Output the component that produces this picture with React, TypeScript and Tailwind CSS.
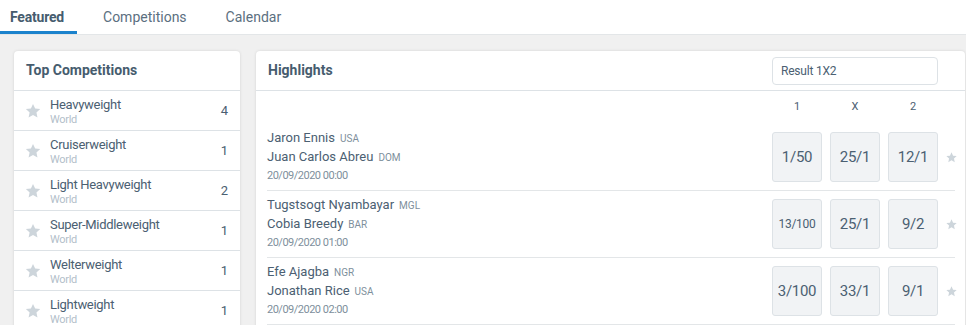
import React from "react";

const competitions = [
  { name: "Heavyweight", count: 4 },
  { name: "Cruiserweight", count: 1 },
  { name: "Light Heavyweight", count: 2 },
  { name: "Super-Middleweight", count: 1 },
  { name: "Welterweight", count: 1 },
  { name: "Lightweight", count: 1 },
];

const fights = [
  {
    home: "Jaron Ennis",
    homeCc: "USA",
    away: "Juan Carlos Abreu",
    awayCc: "DOM",
    date: "20/09/2020 00:00",
    odds: ["1/50", "25/1", "12/1"],
  },
  {
    home: "Tugstsogt Nyambayar",
    homeCc: "MGL",
    away: "Cobia Breedy",
    awayCc: "BAR",
    date: "20/09/2020 01:00",
    odds: ["13/100", "25/1", "9/2"],
  },
  {
    home: "Efe Ajagba",
    homeCc: "NGR",
    away: "Jonathan Rice",
    awayCc: "USA",
    date: "20/09/2020 02:00",
    odds: ["3/100", "33/1", "9/1"],
  },
];

function Star({ className }: { className?: string }) {
  return (
    <svg viewBox="0 0 24 24" className={className} fill="currentColor">
      <path d="M12 2.5l2.9 6.2 6.7.7-5 4.6 1.4 6.7L12 17.3l-5.9 3.4 1.4-6.7-5-4.6 6.7-.7z" />
    </svg>
  );
}

export default function App() {
  return (
    <div className="w-[966px] h-[325px] overflow-hidden bg-[#f0f0f0] font-['Roboto',sans-serif] text-[#4b6072]">
      {/* tabs */}
      <div className="flex h-[35px] bg-white border-b border-[#e3e6e8] gap-[16px]">
        <div className="pl-[10px] pr-[13px] flex items-center text-[14px] tracking-[-0.2px] font-bold text-[#465c6e] border-b-[3px] border-[#1b82cc] pt-[3px]">
          Featured
        </div>
        <div className="pl-[10px] pr-[13px] flex items-center text-[14px] text-[#5b6f80]">
          Competitions
        </div>
        <div className="pl-[10px] flex items-center text-[14px] text-[#5b6f80]">
          Calendar
        </div>
      </div>

      <div className="flex gap-[16px] pl-[14px] pt-[16px]">
        {/* left card */}
        <div className="w-[226px] shrink-0 bg-white rounded-t-[4px] shadow-[0_0_3px_rgba(0,0,0,0.12)]">
          <div className="h-[40px] flex items-center px-[12px] border-b border-[#dde2e6] text-[14px] font-bold text-[#465c6e]">
            Top Competitions
          </div>
          {competitions.map((c) => (
            <div
              key={c.name}
              className="h-[40px] flex items-center border-b border-[#dde2e6] pl-[10px] pr-[12px]"
            >
              <Star className="w-[18px] h-[18px] text-[#cdd5db]" />
              <div className="ml-[8px] mt-[3px] flex-1 flex flex-col">
                <span className="text-[13px] tracking-[-0.3px] text-[#4b6072] leading-[16px]">
                  {c.name}
                </span>
                <span className="text-[11px] tracking-[-0.3px] text-[#b3c0ca] leading-[14px]">
                  World
                </span>
              </div>
              <span className="text-[13px] text-[#4b6072]">{c.count}</span>
            </div>
          ))}
        </div>

        {/* right card */}
        <div className="w-[709px] shrink-0 bg-white rounded-t-[4px] shadow-[0_0_3px_rgba(0,0,0,0.12)]">
          <div className="h-[40px] flex items-center justify-between border-b border-[#dde2e6] pl-[12px] pr-[27px]">
            <span className="text-[14px] font-bold text-[#465c6e]">Highlights</span>
            <div className="w-[166px] h-[28px] border border-[#dde2e6] rounded-[4px] flex items-center px-[8px] text-[12px] tracking-[-0.2px] text-[#4b6072]">
              Result 1X2
            </div>
          </div>
          <div className="pl-[11px] pr-[10px]">
            <div className="h-[33px] flex items-center justify-end pr-[17px] gap-[8px]">
              {["1", "X", "2"].map((h) => (
                <div key={h} className="w-[50px] text-center text-[11px] text-[#4b6072]">
                  {h}
                </div>
              ))}
            </div>
            {fights.map((f) => (
              <div
                key={f.home}
                className="flex items-center py-[8px] border-b border-[#e3e6e8]"
              >
                <div className="flex-1 h-[50px] flex flex-col justify-center">
                  <div className="leading-[18px] text-[13px] text-[#4b6072] whitespace-nowrap">
                    {f.home}
                    <span className="ml-[5px] text-[10px] text-[#7e8f9c]">{f.homeCc}</span>
                  </div>
                  <div className="leading-[18px] text-[13px] text-[#4b6072] whitespace-nowrap">
                    {f.away}
                    <span className="ml-[5px] text-[10px] text-[#7e8f9c]">{f.awayCc}</span>
                  </div>
                  <div className="leading-[18px] text-[11px] tracking-[-0.5px] text-[#7e8f9c]">
                    {f.date}
                  </div>
                </div>
                <div className="flex gap-[8px]">
                  {f.odds.map((o, i) => (
                    <div
                      key={i}
                      className={`w-[50px] h-[50px] flex items-center justify-center rounded-[3px] border border-[#dde2e6] bg-[#f1f3f5] text-[#4b6072] tracking-[-0.3px] ${
                        o.length > 5 ? "text-[12px]" : "text-[15px]"
                      }`}
                    >
                      {o}
                    </div>
                  ))}
                </div>
                <div className="w-[17px] flex justify-start">
                  <Star className="w-[13px] h-[13px] ml-[7px] shrink-0 text-[#cdd5db]" />
                </div>
              </div>
            ))}
          </div>
        </div>
      </div>
    </div>
  );
}
